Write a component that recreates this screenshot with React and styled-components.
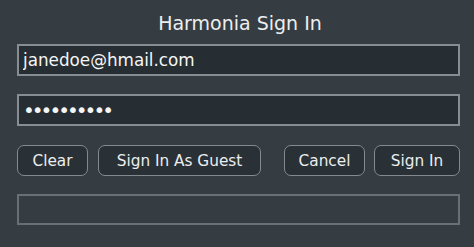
import React from 'react'
import styled, { createGlobalStyle } from 'styled-components'

const GlobalStyle = createGlobalStyle`
  html, body {
    margin: 0;
    padding: 0;
    background: #353d43;
  }
  body {
    font-family: "DejaVu Sans", Verdana, sans-serif;
  }
`;

const Window = styled.div`
  width: 474px;
  height: 247px;
  box-sizing: border-box;
  padding: 10px 14px 0 17px;
  background: #353d43;
  display: flex;
  flex-direction: column;
`;

const Title = styled.div`
  height: 26px;
  line-height: 26px;
  margin-bottom: 8px;
  text-align: center;
  font-size: 19px;
  color: #eceeef;
  padding-left: 3px;
`;

const Fields = styled.div`
  display: flex;
  flex-direction: column;
  gap: 18px;
`;

const TextField = styled.input`
  box-sizing: border-box;
  width: 443px;
  height: 32px;
  margin: 0;
  padding: 0 4px 1px 4px;
  background: #272e33;
  border: 2px solid #868e94;
  color: #f4f5f6;
  font-family: "DejaVu Sans", Verdana, sans-serif;
  font-size: ${(p) => (p.type === 'password' ? '20px' : '16.8px')};
  letter-spacing: ${(p) => (p.type === 'password' ? '-3px' : '0')};
  outline: none;
`;

const ButtonRow = styled.div`
  display: flex;
  justify-content: space-between;
  width: 443px;
  margin-top: 1px;
`;

const ButtonGroup = styled.div`
  display: flex;
  gap: ${(p) => p.$gap}px;
`;

const Button = styled.button`
  box-sizing: border-box;
  width: ${(p) => p.$w}px;
  height: 31px;
  padding: 0;
  background: #2a3136;
  border: 1px solid #838b91;
  border-radius: 7px;
  color: #eceeef;
  font-family: "DejaVu Sans", Verdana, sans-serif;
  font-size: 15.3px;
  cursor: pointer;
`;

const StatusBox = styled.div`
  box-sizing: border-box;
  width: 443px;
  height: 31px;
  border: 2px solid #687076;
`;

export default function App() {
  return (
    <>
      <GlobalStyle />
      <Window>
        <Title>Harmonia Sign In</Title>
        <Fields>
          <TextField type="text" defaultValue="janedoe@hmail.com" />
          <TextField type="password" defaultValue="secret1234" />
          <ButtonRow>
            <ButtonGroup $gap={10}>
              <Button $w={71}>Clear</Button>
              <Button $w={163}>Sign In As Guest</Button>
            </ButtonGroup>
            <ButtonGroup $gap={9}>
              <Button $w={81}>Cancel</Button>
              <Button $w={86}>Sign In</Button>
            </ButtonGroup>
          </ButtonRow>
          <StatusBox />
        </Fields>
      </Window>
    </>
  )
}
